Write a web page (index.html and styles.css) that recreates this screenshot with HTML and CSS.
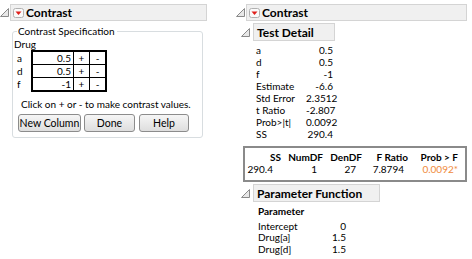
FILE: index.html
```html
<!DOCTYPE html>
<html>
<head>
  <title>Contrast</title>
  <link rel="stylesheet" href="styles.css">
</head>
<body>
  <div class="page">
    <!-- left: contrast specification dialog -->
    <div class="pane pane-left">
      <div class="outline-head">
        <svg class="tri" width="9" height="9" viewBox="0 0 9 9"><polygon points="0.5,8.5 8.5,0.5 8.5,8.5" fill="#e8e8e8" stroke="#8a8a8a"/></svg>
        <div class="bar bar-main">
          <svg class="menu-icon" width="11" height="10" viewBox="0 0 11 10"><rect x="0.5" y="0.5" width="10" height="9" rx="2" fill="#fafafa" stroke="#b0b0b0"/><polygon points="2.5,3.5 8.5,3.5 5.5,7" fill="#e0201c"/></svg>
          <span class="bar-title">Contrast</span>
        </div>
      </div>

      <fieldset class="spec">
        <legend>Contrast Specification</legend>
        <div class="drug">Drug</div>
        <div class="spec-table">
          <div class="levels">
            <span>a</span>
            <span>d</span>
            <span>f</span>
          </div>
          <table class="coef">
            <tr><td class="val">0.5</td><td class="pm">+</td><td class="pm">-</td></tr>
            <tr><td class="val">0.5</td><td class="pm">+</td><td class="pm">-</td></tr>
            <tr><td class="val">-1</td><td class="pm">+</td><td class="pm">-</td></tr>
          </table>
        </div>
        <p class="hint">Click on + or - to make contrast values.</p>
        <div class="buttons">
          <button class="btn btn-new">New Column</button>
          <button class="btn btn-done">Done</button>
          <button class="btn btn-help">Help</button>
        </div>
      </fieldset>
    </div>

    <!-- right: report -->
    <div class="pane pane-right">
      <div class="outline-head">
        <svg class="tri" width="9" height="9" viewBox="0 0 9 9"><polygon points="0.5,8.5 8.5,0.5 8.5,8.5" fill="#e8e8e8" stroke="#8a8a8a"/></svg>
        <div class="bar bar-main bar-wide">
          <svg class="menu-icon" width="11" height="10" viewBox="0 0 11 10"><rect x="0.5" y="0.5" width="10" height="9" rx="2" fill="#fafafa" stroke="#b0b0b0"/><polygon points="2.5,3.5 8.5,3.5 5.5,7" fill="#e0201c"/></svg>
          <span class="bar-title">Contrast</span>
        </div>
      </div>

      <div class="sub">
        <div class="outline-head">
          <svg class="tri" width="9" height="9" viewBox="0 0 9 9"><polygon points="0.5,8.5 8.5,0.5 8.5,8.5" fill="#e8e8e8" stroke="#8a8a8a"/></svg>
          <div class="bar bar-sub">Test Detail</div>
        </div>
        <div class="detail">
          <span>a</span><span class="num">0.5</span>
          <span>d</span><span class="num">0.5</span>
          <span>f</span><span class="num">-1</span>
          <span>Estimate</span><span class="num">-6.6</span>
          <span>Std Error</span><span class="num">2.3512</span>
          <span>t Ratio</span><span class="num">-2.807</span>
          <span>Prob&gt;|t|</span><span class="num">0.0092</span>
          <span>SS</span><span class="num">290.4</span>
        </div>
      </div>

      <div class="ftest">
        <table>
          <tr><th class="c-ss">SS</th><th class="c-num">NumDF</th><th class="c-den">DenDF</th><th class="c-f">F Ratio</th><th class="c-p">Prob &gt; F</th></tr>
          <tr><td class="c-ss">290.4</td><td class="c-num">1</td><td class="c-den">27</td><td class="c-f">7.8794</td><td class="c-p sig">0.0092*</td></tr>
        </table>
      </div>

      <div class="sub">
        <div class="outline-head">
          <svg class="tri" width="9" height="9" viewBox="0 0 9 9"><polygon points="0.5,8.5 8.5,0.5 8.5,8.5" fill="#e8e8e8" stroke="#8a8a8a"/></svg>
          <div class="bar bar-sub bar-param">Parameter Function</div>
        </div>
        <div class="params">
          <span class="param-head">Parameter</span><span></span>
          <span>Intercept</span><span class="num">0</span>
          <span>Drug[a]</span><span class="num">1.5</span>
          <span>Drug[d]</span><span class="num">1.5</span>
        </div>
      </div>
    </div>
  </div>
</body>
</html>
```

FILE: styles.css
```css
body {
  margin: 0;
  font-family: Lato, "Noto Sans", sans-serif;
  font-size: 10px;
  color: #000;
  background: #fff;
  white-space: nowrap;
}

.page {
  display: flex;
  padding-top: 4px;
}

.pane-left {
  width: 236px;
}

.pane-right {
  width: 236px;
}

.outline-head {
  display: flex;
  align-items: center;
}

.tri {
  display: block;
  margin: 0 1px 0 0;
  flex: none;
}

.bar {
  display: flex;
  align-items: center;
  height: 15px;
  background-color: #f0f0f0;
  border: 1px solid #d4d4d4;
}

.bar-main {
  width: 193px;
  padding-left: 2px;
}

.bar-wide {
  width: 217px;
}

.menu-icon {
  display: block;
  margin-right: 2px;
}

.bar-title {
  font-weight: bold;
  font-size: 12px;
  line-height: 15px;
}

/* specification box */

.spec {
  margin: 4px 0 0 12px;
  width: 191px;
  height: 113px;
  box-sizing: border-box;
  padding: 0 0 0 1px;
  border: 1px solid #d8dde0;
  border-radius: 3px;
}

.spec legend {
  margin-left: 3px;
  padding: 0 2px 0 1px;
  line-height: 13px;
}

.drug {
  line-height: 12px;
}

.spec-table {
  display: flex;
}

.levels {
  display: flex;
  flex-direction: column;
  width: 14px;
  padding: 2px 0 0 3px;
}

.levels span {
  line-height: 13px;
}

.coef {
  border-collapse: collapse;
  border: 2px solid #000;
}

.coef td {
  border: 1px solid #000;
  height: 12px;
  padding: 0;
  line-height: 12px;
}

.coef .val {
  width: 38px;
  text-align: right;
  padding-right: 2px;
}

.coef .pm {
  width: 15px;
  text-align: center;
}

.hint {
  margin: 6px 0 0 7px;
  line-height: 13px;
}

.buttons {
  display: flex;
  gap: 3px;
  margin: 3px 0 0 4px;
}

.btn {
  height: 18px;
  font-family: inherit;
  font-size: 10.5px;
  padding: 0;
  border: 1px solid #8c8c8c;
  border-radius: 3px;
  background: linear-gradient(#f6f6f6, #dedede);
  color: #000;
  white-space: nowrap;
}

.btn-new {
  width: 63px;
}

.btn-done {
  width: 51px;
}

.btn-help {
  width: 50px;
  margin-left: 1px;
}

/* report side */

.sub {
  margin-left: 5px;
}

.sub .outline-head {
  margin-top: 2px;
}

.sub .tri {
  margin-right: 3px;
}

.bar-sub {
  font-weight: bold;
  font-size: 12px;
  padding-left: 3px;
  width: 77px;
  height: 16px;
}

.bar-param {
  width: 122px;
}

.detail {
  display: grid;
  grid-template-columns: 50px 27px;
  margin: 3px 0 0 15px;
  line-height: 12px;
}

.num {
  text-align: right;
}

.ftest {
  margin: 6px 5px 0 7px;
  border: 2px solid #8a8a8a;
  height: 36px;
  box-sizing: border-box;
}

.ftest table {
  border-collapse: collapse;
  margin-top: 3px;
}

.ftest th,
.ftest td {
  box-sizing: border-box;
  padding: 0;
  line-height: 12px;
  text-align: right;
}

.ftest th {
  font-weight: bold;
}

.c-ss {
  width: 36px;
}

.c-num {
  width: 42px;
}

.c-den {
  width: 39px;
}

.c-f {
  width: 46px;
}

.c-p {
  width: 50px;
}

.ftest td.c-ss {
  padding-right: 8px;
}

.ftest td.c-num {
  padding-right: 6px;
}

.ftest td.c-den {
  padding-right: 6px;
}

.ftest td.c-f {
  padding-right: 4px;
}

.sig {
  color: #f08a3c;
}

.params {
  display: grid;
  grid-template-columns: 60px 28px;
  margin: 4px 0 0 17px;
  line-height: 11.5px;
}

.param-head {
  font-weight: bold;
  margin-bottom: 3px;
}
```
